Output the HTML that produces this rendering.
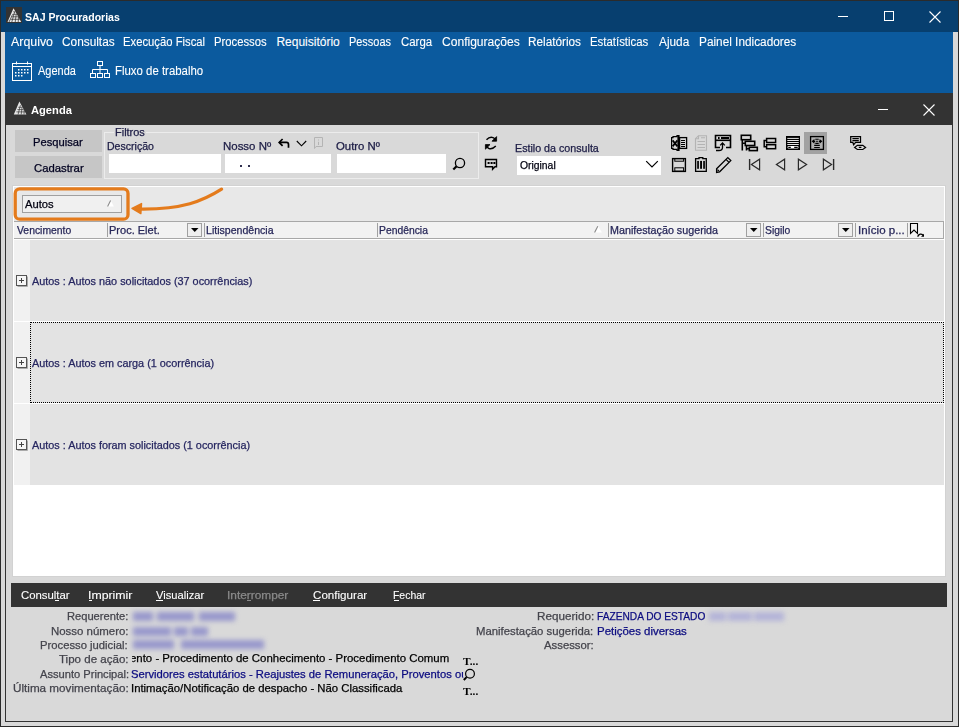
<!DOCTYPE html>
<html><head><meta charset="utf-8"><style>
html,body{margin:0;padding:0;width:959px;height:727px;overflow:hidden;position:relative;background:#d9d9d9;font-family:"Liberation Sans",sans-serif}
.b{position:absolute;box-sizing:border-box}
.tx{position:absolute;white-space:pre;line-height:1;transform-origin:0 0;font-family:"Liberation Sans",sans-serif;-webkit-text-stroke:0.25px currentColor}
svg{position:absolute;overflow:visible}

</style></head><body>
<!-- outer frame -->
<div class="b" style="left:0;top:0;width:959px;height:727px;background:#2b2b2b"></div>
<div class="b" style="left:1px;top:1px;width:957px;height:725px;background:#d9d9d9"></div>
<div class="b" style="left:1px;top:1px;width:957px;height:31px;background:#073f6f"></div>
<div class="b" style="left:5px;top:32px;width:948px;height:61px;background:#0b5a9e"></div>
<!-- title icon -->
<div class="b" style="left:6px;top:7px;width:16px;height:16px;background:#333"></div>
<svg style="left:6px;top:7px" width="16" height="16" viewBox="0 0 16 16"><path d="M7.5 1.2 L15.2 14.9 L1.5 14.9 Z" fill="#ececec"/><path d="M4.6 12.3H13.8M5.6 9.8H12.4M6.6 7.3H11M7.2 4.8H9.6M5.8 15L8.6 5M9.2 15L10.2 7.5M12.2 15L12.5 10M3 15L6.6 7.4" stroke="#333" stroke-width="0.75" fill="none"/></svg>
<!-- title controls -->
<div class="b" style="left:838px;top:16px;width:10px;height:1px;background:#fff"></div>
<div class="b" style="left:884px;top:11px;width:10px;height:10px;border:1px solid #fff"></div>
<svg style="left:929px;top:11px" width="12" height="12" viewBox="0 0 12 12"><path d="M0.5 0.5L11.5 11.5M11.5 0.5L0.5 11.5" stroke="#fff" stroke-width="1.1"/></svg>
<!-- calendar icon -->
<svg style="left:12px;top:61px" width="20" height="20" viewBox="0 0 20 20" fill="none" stroke="#fff" stroke-width="1"><rect x="0.5" y="2.5" width="19" height="17"/><line x1="0.5" y1="5.5" x2="19.5" y2="5.5"/><line x1="4.5" y1="0.5" x2="4.5" y2="3.5"/><line x1="15.5" y1="0.5" x2="15.5" y2="3.5"/><g fill="#fff" stroke="none"><rect x="6" y="8" width="1.5" height="1.5"/><rect x="9" y="8" width="1.5" height="1.5"/><rect x="12" y="8" width="1.5" height="1.5"/><rect x="15" y="8" width="1.5" height="1.5"/><rect x="3" y="11" width="1.5" height="1.5"/><rect x="6" y="11" width="1.5" height="1.5"/><rect x="9" y="11" width="1.5" height="1.5"/><rect x="12" y="11" width="1.5" height="1.5"/><rect x="15" y="11" width="1.5" height="1.5"/><rect x="3" y="14" width="1.5" height="1.5"/><rect x="6" y="14" width="1.5" height="1.5"/><rect x="9" y="14" width="1.5" height="1.5"/></g></svg>
<!-- org icon -->
<svg style="left:90px;top:61px" width="20" height="17" viewBox="0 0 20 17" fill="none" stroke="#fff" stroke-width="1"><rect x="7.5" y="0.5" width="5" height="4"/><line x1="10" y1="4.5" x2="10" y2="12.5"/><line x1="2.5" y1="8.5" x2="17.5" y2="8.5"/><line x1="2.5" y1="8.5" x2="2.5" y2="12.5"/><line x1="17.5" y1="8.5" x2="17.5" y2="12.5"/><rect x="0.5" y="12.5" width="5" height="4"/><rect x="7.5" y="12.5" width="5" height="4"/><rect x="14.5" y="12.5" width="5" height="4"/></svg>

<!-- inner window -->
<div class="b" style="left:5px;top:93px;width:948px;height:629px;background:#333"></div>
<div class="b" style="left:6px;top:125px;width:946px;height:596px;background:#d9d9d9"></div>
<svg style="left:13px;top:101px" width="14" height="14" viewBox="0 0 14 14"><path d="M6.4 0.6 L13.4 13.4 L0.8 13.4 Z" fill="#e6e6e6"/><path d="M3.4 10.9H12M4.4 8.6H10.8M5.3 6.3H9.6M5.1 13.5L7.4 4.2M8.2 13.5L9 6.6M11 13.5L11.2 9" stroke="#333" stroke-width="0.7" fill="none"/></svg>
<div class="b" style="left:878px;top:109px;width:10px;height:1px;background:#fff"></div>
<svg style="left:923px;top:104px" width="12" height="12" viewBox="0 0 12 12"><path d="M0.5 0.5L11.5 11.5M11.5 0.5L0.5 11.5" stroke="#fff" stroke-width="1.1"/></svg>

<!-- buttons -->
<div class="b" style="left:15px;top:130px;width:87px;height:22px;background:#c6c6c6"></div>
<div class="b" style="left:15px;top:156px;width:87px;height:22px;background:#c6c6c6"></div>
<!-- groupbox -->
<div class="b" style="left:104px;top:132px;width:375px;height:47px;border:1px solid #ececec"></div>
<div class="b" style="left:114px;top:130px;width:32px;height:4px;background:#d9d9d9"></div>
<div class="b" style="left:109px;top:154px;width:112px;height:19px;background:#fff"></div>
<div class="b" style="left:225px;top:154px;width:106px;height:19px;background:#fff"></div>
<div class="b" style="left:337px;top:154px;width:109px;height:19px;background:#fff"></div>
<div class="b" style="left:517px;top:156px;width:144px;height:19px;background:#fff"></div>
<div class="b" style="left:240px;top:165px;width:2px;height:2px;background:#303050"></div>
<div class="b" style="left:248px;top:165px;width:2px;height:2px;background:#303050"></div>

<!-- small icons near filters -->
<svg style="left:274px;top:134px" width="20" height="16" viewBox="0 0 20 16" fill="none" stroke="#000" stroke-width="1.7"><path d="M5 8.4H12.5Q14.5 8.4 14.5 10.5V13.7"/><path d="M8.6 5L5.2 8.4L8.6 11.8" stroke-linejoin="miter"/></svg>
<svg style="left:294px;top:138px" width="16" height="12" viewBox="0 0 16 12" fill="none" stroke="#000" stroke-width="1.1"><path d="M2.8 3L7.5 7.8L12.2 3"/></svg>
<svg style="left:312px;top:135px" width="14" height="16" viewBox="0 0 14 16" fill="none" stroke="#b4b4b4" stroke-width="1"><path d="M2.5 2.5H10.5V11.5H4L2.5 13.5Z"/><path d="M6.5 4.5V5.5M6.5 6.8V10" /></svg>
<svg style="left:448px;top:132px" width="56" height="42" viewBox="0 0 56 42" fill="none" stroke="#000"><circle cx="12" cy="31" r="4.6" stroke-width="1.3"/><path d="M8.6 34.3L5.3 37.5" stroke-width="2.2"/>
<path d="M38.5 7.8Q41.5 4.5 45 5.6Q46.8 6.3 47.6 8" stroke-width="1.4"/><path d="M44 9.2H48.6V4.6Z" fill="#000" stroke-width="0.8"/>
<path d="M47.8 14Q44.5 17.5 41 16.5Q39.2 15.8 38.4 14" stroke-width="1.4"/><path d="M42 12.6H37.4V17.2Z" fill="#000" stroke-width="0.8"/>
<path d="M37.5 27.5H48.5V34.8H47L44.6 37.2V34.8H37.5Z" stroke-width="1.4"/><rect x="39.6" y="30" width="2" height="2" fill="#000" stroke="none"/><rect x="42.6" y="30" width="2" height="2" fill="#000" stroke="none"/><rect x="45.4" y="30" width="2" height="2" fill="#000" stroke="none"/></svg>

<!-- toolbar icons -->
<svg style="left:668px;top:132px" width="44" height="22" viewBox="0 0 44 22" fill="none" stroke="#000" stroke-width="1.2">
<path d="M10 3.6H9V4.6H5V5.6H3.6V16.4H5V17.4H9V18.4H10"/><rect x="9.4" y="3" width="2.2" height="16" fill="#000" stroke="none"/>
<rect x="11.6" y="5.6" width="7" height="10.8" stroke-width="1.3"/><path d="M13 8.5H17M13 10.5H17M13 12.5H17M13 14.5H17" stroke-width="1.1"/>
<path d="M4.6 8.4L9.4 14.4M9.4 8.4L4.6 14.4" stroke-width="1.7"/>
<g stroke="#b4b4b4" stroke-width="1.1"><path d="M30.5 3.7H38.5V18.3H27.5V6.7Z"/><path d="M27.5 6.7H30.5V3.7"/><path d="M33 5.7H37M29.5 9.5H37M29.5 12.5H37M29.5 15.5H37"/></g>
</svg>
<svg style="left:712px;top:132px" width="46" height="22" viewBox="0 0 46 22" fill="none" stroke="#000" stroke-width="1.6">
<path d="M8 15.5H3.5V3.5H18.5V15.5H14"/><path d="M3.5 8.3H18.5"/><rect x="6" y="5" width="1.6" height="2" fill="#000" stroke="none"/><rect x="9" y="5" width="8" height="2" fill="#000" stroke="none"/>
<path d="M10.5 11.8V15.5Q10.5 18.5 7 18.5H4" stroke-width="1.3"/><path d="M8.2 13.4L10.5 11L12.8 13.4" stroke-width="1.3"/>
<rect x="29.3" y="3.3" width="9.4" height="4.4"/><path d="M30.3 7.7V18.6M30.3 11.2H33.2M34.5 13.5V18.6M34.5 16.8H37.2"/><rect x="33.3" y="9.3" width="9.4" height="4.2"/><rect x="37.3" y="15.3" width="8" height="3.3"/>
</svg>
<svg style="left:756px;top:132px" width="44" height="22" viewBox="0 0 44 22" fill="none" stroke="#000" stroke-width="1.5">
<rect x="10.6" y="6.5" width="9" height="4"/><rect x="10.6" y="12.7" width="9" height="4"/><path d="M10.6 8.5H8.2V14.7H10.6"/>
<rect x="30" y="4" width="14" height="14" fill="#000" stroke="none"/><path d="M31.3 6.4H42.8M31.3 8.5H42.8M31.3 10.5H42.8M31.3 12.5H42.8" stroke="#fff" stroke-width="0.9"/><rect x="31.5" y="14" width="11" height="2.6" fill="#fff" stroke="none" rx="1"/><path d="M32.3 15.3H34.8M38.2 15.3H41.7" stroke-width="1.2"/>
</svg>
<div class="b" style="left:804px;top:132px;width:23px;height:22px;background:#a2a2a2"></div>
<svg style="left:640px;top:155px" width="24" height="20" viewBox="0 0 24 20" fill="none" stroke="#000" stroke-width="1.2"><path d="M6.2 6.2L12 12L17.8 6.2"/></svg>
<svg style="left:798px;top:128px" width="44" height="30" viewBox="0 0 44 30" fill="none" stroke="#000" stroke-width="1.3">
<rect x="12.6" y="8.6" width="12.8" height="12.8" fill="#b2b2b2"/><path d="M13.6 13.3L16.4 10.9V15.7Z M24.4 13.3L21.6 10.9V15.7Z" fill="#000" stroke="none"/><path d="M16 13.3H17.2M20.8 13.3H22M18.3 13.3H19.7" stroke-width="1.2"/><path d="M17.3 11.2H20.7M17.3 15.4H20.7M16.2 17.4H21.8M16.2 19.5H21.8" stroke-width="1.1"/>
</svg>
<svg style="left:842px;top:130px" width="30" height="24" viewBox="0 0 30 24" fill="none" stroke="#000" stroke-width="1.25">
<path d="M10.8 12.3H8.7V6.5H18.5V12.3H13.6L11.6 14.8Z"/><path d="M10.4 8.6H16.8M10.4 10.6H16.8" stroke-width="1.2"/>
<path d="M12.6 17.4L15.4 15.3H20.8L23.6 17.4L20.8 19.5H15.4Z" stroke-width="1.2"/><path d="M16.8 17.4H19.4" stroke-width="1.3"/>
</svg>
<svg style="left:668px;top:154px" width="66" height="22" viewBox="0 0 66 22" fill="none" stroke="#000" stroke-width="1.4">
<rect x="4.6" y="4.6" width="12.8" height="12.8"/><rect x="6.8" y="4.6" width="8.8" height="2.6" stroke-width="1"/><rect x="6.8" y="13.8" width="8.8" height="3.4" stroke-width="1"/>
<path d="M27.6 17.3V4.6H31V3.6H34.8V4.6H38.3V17.3Z" stroke-width="1.3"/><rect x="29.2" y="6.9" width="1.7" height="7.9" fill="#000" stroke="none"/><rect x="32.1" y="6.9" width="1.9" height="7.9" fill="#000" stroke="none"/><rect x="35.2" y="6.9" width="1.7" height="7.9" fill="#000" stroke="none"/>
<path d="M48.6 14.8L59.8 3.6L62.8 6.6L51.6 17.8L48.6 18.4Z" stroke-width="1.3"/><path d="M58 5.4L61 8.4M49.5 15.6L50.8 17" stroke-width="1.2"/>
</svg>
<svg style="left:744px;top:154px" width="96" height="22" viewBox="0 0 96 22" fill="none" stroke="#2a2a2a" stroke-width="1.2">
<path d="M5.6 5V16" stroke-width="1.4"/><path d="M15.6 5.2V15.8L7.4 10.5Z"/><path d="M40.6 5.2V15.8L32.4 10.5Z"/><path d="M54.4 5.2V15.8L62.6 10.5Z"/><path d="M79.4 5.2V15.8L87.6 10.5Z"/><path d="M89.6 5V16" stroke-width="1.4"/>
</svg>

<!-- grid -->
<div class="b" style="left:12px;top:185px;width:934px;height:392px;background:#d2d2d2"></div>
<div class="b" style="left:13px;top:186px;width:932px;height:390px;background:#fff"></div>
<div class="b" style="left:14px;top:187px;width:930px;height:34px;background:#e8e8e8"></div>
<div class="b" style="left:14px;top:221px;width:930px;height:18px;background:#f2f2f2;border-top:1px solid #a8a8a8;border-bottom:1px solid #a8a8a8;border-right:1px solid #a8a8a8"></div>
<div class="b" style="left:14px;top:240px;width:930px;height:81px;background:#e3e3e3"></div>
<div class="b" style="left:14px;top:322px;width:930px;height:81px;background:#e3e3e3"></div>
<div class="b" style="left:14px;top:404px;width:930px;height:81px;background:#e3e3e3"></div>
<div class="b" style="left:14px;top:240px;width:16px;height:245px;background:#f1f1f1"></div>
<div class="b" style="left:14px;top:321px;width:930px;height:1px;background:#fff"></div>
<div class="b" style="left:14px;top:403px;width:930px;height:1px;background:#fff"></div>
<div class="b" style="left:30px;top:322px;width:914px;height:81px;border:1px dotted #000"></div>
<!-- header separators & dropdowns -->
<div class="b" style="left:107px;top:223px;width:1px;height:14px;background:#a0a0a0"></div>
<div class="b" style="left:204px;top:223px;width:1px;height:14px;background:#a0a0a0"></div>
<div class="b" style="left:377px;top:223px;width:1px;height:14px;background:#a0a0a0"></div>
<div class="b" style="left:608px;top:223px;width:1px;height:14px;background:#a0a0a0"></div>
<div class="b" style="left:763px;top:223px;width:1px;height:14px;background:#a0a0a0"></div>
<div class="b" style="left:855px;top:223px;width:1px;height:14px;background:#a0a0a0"></div>
<div class="b" style="left:907px;top:223px;width:1px;height:14px;background:#a0a0a0"></div>
<div class="b" style="left:187px;top:223px;width:15px;height:14px;border:1px solid #a0a0a0;background:#efefef"></div>
<div class="b" style="left:746px;top:223px;width:15px;height:14px;border:1px solid #a0a0a0;background:#efefef"></div>
<div class="b" style="left:838px;top:223px;width:15px;height:14px;border:1px solid #a0a0a0;background:#efefef"></div>
<!-- autos box -->
<div class="b" style="left:22px;top:195px;width:100px;height:18px;background:#f0f0f0;border:1px solid #a0a0a0"></div>
<svg style="left:0;top:0" width="959" height="727" viewBox="0 0 959 727">
<path d="M191 228H198.5L194.75 232Z" fill="#000"/><path d="M750 228H757.5L753.75 232Z" fill="#000"/><path d="M842 228H849.5L845.75 232Z" fill="#000"/>
<path d="M594.5 232.5L598 226L602 232.5Z" fill="#ffffff"/><path d="M594.6 232.4L597.8 226.2" stroke="#888" stroke-width="1.1" fill="none"/>
<path d="M107.5 206.5L110.7 200.3L113.8 206.5Z" fill="#ffffff"/><path d="M107.6 206.4L110.6 200.4" stroke="#888" stroke-width="1.1" fill="none"/>
<path d="M910.5 233.5V223.5H917.5V233.5L914 230Z" fill="none" stroke="#000" stroke-width="1.1"/>
<path d="M917.6 236.6Q920 232.5 923.2 235.3" fill="none" stroke="#000" stroke-width="1.3"/><path d="M921 236.8H924V233.8Z" fill="#000"/>
<!-- plus boxes -->
<g><rect x="16.5" y="275.5" width="10" height="10" fill="#f6f6f6" stroke="#555"/><path d="M27.5 276.5V286.5H17.5" stroke="#aaa" fill="none"/><path d="M19 280.5H24M21.5 278V283" stroke="#444"/></g>
<g><rect x="16.5" y="357.5" width="10" height="10" fill="#f6f6f6" stroke="#555"/><path d="M27.5 358.5V368.5H17.5" stroke="#aaa" fill="none"/><path d="M19 362.5H24M21.5 360V365" stroke="#444"/></g>
<g><rect x="16.5" y="439.5" width="10" height="10" fill="#f6f6f6" stroke="#555"/><path d="M27.5 440.5V450.5H17.5" stroke="#aaa" fill="none"/><path d="M19 444.5H24M21.5 442V447" stroke="#444"/></g>
<!-- bottom search -->
<circle cx="470" cy="673.7" r="4.4" fill="none" stroke="#000" stroke-width="1.2"/><path d="M466.6 677.1L463.8 680" stroke="#000" stroke-width="2"/>
</svg>


<!-- orange annotation -->
<svg style="left:0;top:0" width="959" height="727" viewBox="0 0 959 727">
<rect x="15.2" y="188.9" width="112.8" height="30.3" rx="4.5" fill="none" stroke="#e47b1c" stroke-width="3.3"/>
<path d="M221.6 189.2C203 201 183 209.6 139 209" fill="none" stroke="#e47b1c" stroke-width="3.2" stroke-linecap="round"/>
<path d="M132 208.4L141.5 203.6L140.8 213.6Z" fill="#e47b1c" stroke="#e47b1c" stroke-width="1.5" stroke-linejoin="round"/>
</svg>

<!-- bottom bar -->
<div class="b" style="left:11px;top:583px;width:936px;height:24px;background:#333"></div>

<!-- blurred values -->
<div style="position:absolute;left:0;top:0;width:959px;height:727px;filter:blur(2.6px)">
<div class="b" style="left:133px;top:612px;width:20px;height:9px;background:#9898cc"></div>
<div class="b" style="left:157px;top:612px;width:37px;height:9px;background:#9898cc"></div>
<div class="b" style="left:199px;top:612px;width:36px;height:9px;background:#9898cc"></div>
<div class="b" style="left:133px;top:627px;width:38px;height:9px;background:#9898cc"></div>
<div class="b" style="left:174px;top:627px;width:14px;height:9px;background:#9898cc"></div>
<div class="b" style="left:191px;top:627px;width:17px;height:9px;background:#9898cc"></div>
<div class="b" style="left:133px;top:640px;width:41px;height:9px;background:#9898cc"></div>
<div class="b" style="left:181px;top:640px;width:83px;height:9px;background:#9898cc"></div>
<div class="b" style="left:709px;top:612px;width:17px;height:9px;background:#b4b4d8"></div>
<div class="b" style="left:728px;top:612px;width:24px;height:9px;background:#b4b4d8"></div>
<div class="b" style="left:754px;top:612px;width:30px;height:9px;background:#b4b4d8"></div>
</div>
<!-- underlines -->
<div class="b" style="left:55px;top:600px;width:4px;height:1px;background:#fff"></div>
<div class="b" style="left:89px;top:600px;width:3px;height:1px;background:#fff"></div>
<div class="b" style="left:156px;top:600px;width:7px;height:1px;background:#fff"></div>
<div class="b" style="left:247px;top:600px;width:4px;height:1px;background:#8a8a8a"></div>
<div class="b" style="left:313px;top:600px;width:7px;height:1px;background:#fff"></div>
<div class="b" style="left:394px;top:600px;width:5px;height:1px;background:#fff"></div>

<span class="tx" style="left:25.00px;top:12.00px;font-size:11.5px;font-weight:700;color:#ffffff;transform:scaleX(0.9155);-webkit-text-stroke:0;">SAJ Procuradorias</span><span class="tx" style="left:10.60px;top:36.00px;font-size:12px;font-weight:400;color:#ffffff;transform:scaleX(1.0325);-webkit-text-stroke:0.1px currentColor;">Arquivo</span><span class="tx" style="left:61.61px;top:36.00px;font-size:12px;font-weight:400;color:#ffffff;transform:scaleX(0.9865);-webkit-text-stroke:0.1px currentColor;">Consultas</span><span class="tx" style="left:123.26px;top:36.00px;font-size:12px;font-weight:400;color:#ffffff;transform:scaleX(0.9395);-webkit-text-stroke:0.1px currentColor;">Execução Fiscal</span><span class="tx" style="left:214.36px;top:36.00px;font-size:12px;font-weight:400;color:#ffffff;transform:scaleX(0.9400);-webkit-text-stroke:0.1px currentColor;">Processos</span><span class="tx" style="left:276.40px;top:36.00px;font-size:12px;font-weight:400;color:#ffffff;transform:scaleX(1.0000);-webkit-text-stroke:0.1px currentColor;">Requisitório</span><span class="tx" style="left:349.09px;top:36.00px;font-size:12px;font-weight:400;color:#ffffff;transform:scaleX(0.9111);-webkit-text-stroke:0.1px currentColor;">Pessoas</span><span class="tx" style="left:400.55px;top:36.00px;font-size:12px;font-weight:400;color:#ffffff;transform:scaleX(0.9531);-webkit-text-stroke:0.1px currentColor;">Carga</span><span class="tx" style="left:441.59px;top:36.00px;font-size:12px;font-weight:400;color:#ffffff;transform:scaleX(1.0053);-webkit-text-stroke:0.1px currentColor;">Configurações</span><span class="tx" style="left:528.02px;top:36.00px;font-size:12px;font-weight:400;color:#ffffff;transform:scaleX(0.9811);-webkit-text-stroke:0.1px currentColor;">Relatórios</span><span class="tx" style="left:590.05px;top:36.00px;font-size:12px;font-weight:400;color:#ffffff;transform:scaleX(0.9500);-webkit-text-stroke:0.1px currentColor;">Estatísticas</span><span class="tx" style="left:658.50px;top:36.00px;font-size:12px;font-weight:400;color:#ffffff;transform:scaleX(0.9839);-webkit-text-stroke:0.1px currentColor;">Ajuda</span><span class="tx" style="left:698.52px;top:36.00px;font-size:12px;font-weight:400;color:#ffffff;transform:scaleX(0.9845);-webkit-text-stroke:0.1px currentColor;">Painel Indicadores</span><span class="tx" style="left:37.70px;top:65.00px;font-size:12px;font-weight:400;color:#ffffff;transform:scaleX(0.9146);-webkit-text-stroke:0.1px currentColor;">Agenda</span><span class="tx" style="left:114.55px;top:65.00px;font-size:12px;font-weight:400;color:#ffffff;transform:scaleX(0.9505);-webkit-text-stroke:0.1px currentColor;">Fluxo de trabalho</span><span class="tx" style="left:31.25px;top:105.00px;font-size:11.5px;font-weight:700;color:#ffffff;transform:scaleX(0.9702);-webkit-text-stroke:0;">Agenda</span><span class="tx" style="left:32.98px;top:137.00px;font-size:11px;font-weight:400;color:#000020;transform:scaleX(1.0156);">Pesquisar</span><span class="tx" style="left:34.35px;top:163.00px;font-size:11px;font-weight:400;color:#000020;transform:scaleX(1.0287);">Cadastrar</span><span class="tx" style="left:114.76px;top:127.00px;font-size:10.5px;font-weight:400;color:#202048;transform:scaleX(1.0444);">Filtros</span><span class="tx" style="left:106.60px;top:141.00px;font-size:10.5px;font-weight:400;color:#202048;transform:scaleX(1.0044);">Descrição</span><span class="tx" style="left:223.31px;top:141.00px;font-size:10.5px;font-weight:400;color:#202048;transform:scaleX(1.0907);">Nosso Nº</span><span class="tx" style="left:336.20px;top:141.00px;font-size:10.5px;font-weight:400;color:#202048;transform:scaleX(1.0829);">Outro Nº</span><span class="tx" style="left:515.48px;top:143.00px;font-size:10.5px;font-weight:400;color:#202048;transform:scaleX(1.0185);">Estilo da consulta</span><span class="tx" style="left:519.70px;top:160.00px;font-size:10.5px;font-weight:400;color:#000010;transform:scaleX(0.9861);">Original</span><span class="tx" style="left:24.70px;top:199.00px;font-size:10.5px;font-weight:400;color:#000010;transform:scaleX(1.0654);">Autos</span><span class="tx" style="left:16.50px;top:225.00px;font-size:10.5px;font-weight:400;color:#262658;transform:scaleX(0.9891);">Vencimento</span><span class="tx" style="left:109.15px;top:225.00px;font-size:10.5px;font-weight:400;color:#262658;transform:scaleX(1.0489);">Proc. Elet.</span><span class="tx" style="left:206.19px;top:225.00px;font-size:10.5px;font-weight:400;color:#262658;transform:scaleX(1.0061);">Litispendência</span><span class="tx" style="left:379.41px;top:225.00px;font-size:10.5px;font-weight:400;color:#262658;transform:scaleX(0.9857);">Pendência</span><span class="tx" style="left:610.48px;top:225.00px;font-size:10.5px;font-weight:400;color:#262658;transform:scaleX(1.0229);">Manifestação sugerida</span><span class="tx" style="left:765.42px;top:225.00px;font-size:10.5px;font-weight:400;color:#262658;transform:scaleX(0.9833);">Sigilo</span><span class="tx" style="left:857.60px;top:225.00px;font-size:10.5px;font-weight:400;color:#262658;transform:scaleX(1.0976);">Início p...</span><span class="tx" style="left:32.20px;top:276.00px;font-size:10.5px;font-weight:400;color:#262660;transform:scaleX(1.0344);">Autos : Autos não solicitados (37 ocorrências)</span><span class="tx" style="left:32.20px;top:358.00px;font-size:10.5px;font-weight:400;color:#262660;transform:scaleX(1.0330);">Autos : Autos em carga (1 ocorrência)</span><span class="tx" style="left:32.20px;top:440.00px;font-size:10.5px;font-weight:400;color:#262660;transform:scaleX(1.0322);">Autos : Autos foram solicitados (1 ocorrência)</span><span class="tx" style="left:21.18px;top:590.00px;font-size:11px;font-weight:400;color:#ffffff;transform:scaleX(1.0326);-webkit-text-stroke:0.1px currentColor;">Consultar</span><span class="tx" style="left:87.88px;top:590.00px;font-size:11px;font-weight:400;color:#ffffff;transform:scaleX(1.1179);-webkit-text-stroke:0.1px currentColor;">Imprimir</span><span class="tx" style="left:156.30px;top:590.00px;font-size:11px;font-weight:400;color:#ffffff;transform:scaleX(1.0170);-webkit-text-stroke:0.1px currentColor;">Visualizar</span><span class="tx" style="left:312.64px;top:590.00px;font-size:11px;font-weight:400;color:#ffffff;transform:scaleX(1.0560);-webkit-text-stroke:0.1px currentColor;">Configurar</span><span class="tx" style="left:393.05px;top:590.00px;font-size:11px;font-weight:400;color:#ffffff;transform:scaleX(0.9485);-webkit-text-stroke:0.1px currentColor;">Fechar</span><span class="tx" style="left:227.12px;top:590.00px;font-size:11px;font-weight:400;color:#8a8a8a;transform:scaleX(1.0786);">Interromper</span><span class="tx" style="left:66.79px;top:611.00px;font-size:11px;font-weight:400;color:#44444c;transform:scaleX(1.0119);">Requerente:</span><span class="tx" style="left:50.56px;top:626.00px;font-size:11px;font-weight:400;color:#44444c;transform:scaleX(1.0397);">Nosso número:</span><span class="tx" style="left:40.48px;top:640.00px;font-size:11px;font-weight:400;color:#44444c;transform:scaleX(1.0238);">Processo judicial:</span><span class="tx" style="left:59.30px;top:654.00px;font-size:11px;font-weight:400;color:#44444c;transform:scaleX(1.0492);">Tipo de ação:</span><span class="tx" style="left:39.50px;top:669.00px;font-size:11px;font-weight:400;color:#44444c;transform:scaleX(1.0115);">Assunto Principal:</span><span class="tx" style="left:12.74px;top:683.00px;font-size:11px;font-weight:400;color:#44444c;transform:scaleX(1.0626);">Última movimentação:</span><span class="tx" style="left:536.58px;top:611.00px;font-size:11px;font-weight:400;color:#44444c;transform:scaleX(1.0626);">Requerido:</span><span class="tx" style="left:476.47px;top:626.00px;font-size:11px;font-weight:400;color:#44444c;transform:scaleX(1.0304);">Manifestação sugerida:</span><span class="tx" style="left:544.47px;top:640.00px;font-size:11px;font-weight:400;color:#44444c;transform:scaleX(1.0304);">Assessor:</span><span class="tx" style="left:130.40px;top:653.00px;font-size:11px;font-weight:400;color:#000000;transform:scaleX(1.0378);clip-path:inset(-5px 0 -5px 2px)">ento - Procedimento de Conhecimento - Procedimento Comum</span><span class="tx" style="left:131.18px;top:669.00px;font-size:11px;font-weight:400;color:#0c0c80;transform:scaleX(1.0207);clip-path:inset(-5px 4px -5px 0)">Servidores estatutários - Reajustes de Remuneração, Proventos ou</span><span class="tx" style="left:131.17px;top:683.00px;font-size:11px;font-weight:400;color:#000000;transform:scaleX(1.0297);">Intimação/Notificação de despacho - Não Classificada</span><span class="tx" style="left:597.38px;top:611.00px;font-size:11px;font-weight:400;color:#0c0c80;transform:scaleX(0.9250);">FAZENDA DO ESTADO</span><span class="tx" style="left:597.26px;top:626.00px;font-size:11px;font-weight:400;color:#0c0c80;transform:scaleX(1.0412);">Petições diversas</span><span class="tx" style="left:462.50px;top:656.00px;font-size:11px;font-weight:700;color:#000;transform:scaleX(1.0357);-webkit-text-stroke:0;font-family:'Liberation Serif',serif;">T...</span><span class="tx" style="left:462.50px;top:686.00px;font-size:11px;font-weight:700;color:#000;transform:scaleX(1.0357);-webkit-text-stroke:0;font-family:'Liberation Serif',serif;">T...</span>
</body></html>
